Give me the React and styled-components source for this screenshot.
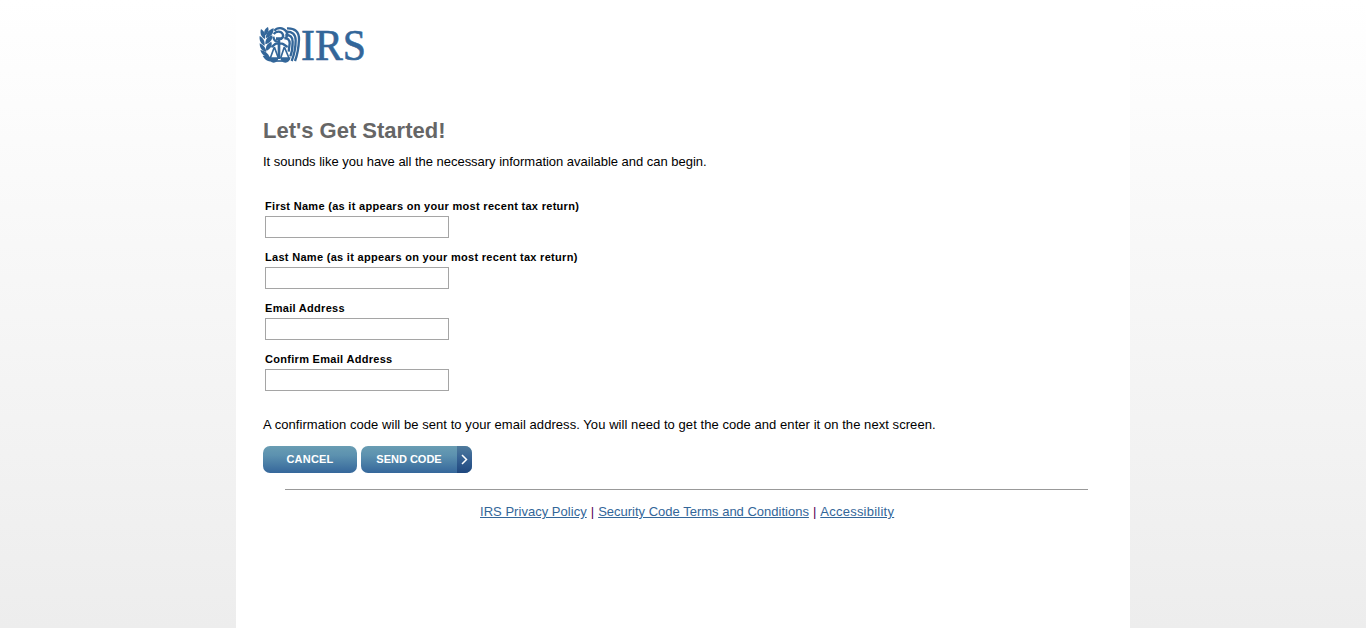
import React from "react";
import styled, { createGlobalStyle } from "styled-components";

const Global = createGlobalStyle`
  body { margin: 0; background: #fff; font-family: "Liberation Sans", Arial, sans-serif; color: #000; }
`;

const Backdrop = styled.div`
  height: 628px;
  display: flex;
  justify-content: center;
  background: linear-gradient(#ffffff, #ededed);
`;

const Page = styled.main`
  box-sizing: border-box;
  width: 894px;
  height: 628px;
  padding: 26px 27px 0;
  background: #fff;
`;

const Logo = styled.svg`
  display: block;
  width: 108px;
  height: 38px;
  margin-left: -4px;
  overflow: visible;
`;

const Wordmark = styled.text`
  font-family: "Liberation Serif", "Times New Roman", serif;
  font-size: 44.5px;
  fill: #336699;
  stroke: #336699;
  stroke-width: 0.6px;
`;

const Title = styled.h1`
  margin: 53px 0 0;
  padding-top: 1px;
  font-size: 22px;
  line-height: 26px;
  color: #666;
`;

const Text = styled.p`
  margin: ${(p) => p.$top}px 0 0;
  font-size: 13px;
  line-height: 16px;
  white-space: nowrap;
  letter-spacing: ${(p) => p.$track}px;
`;

const Form = styled.form`
  display: flex;
  flex-direction: column;
  gap: 13px;
  margin: 30px 0 0 2px;
`;

const Field = styled.label`
  display: flex;
  flex-direction: column;
  align-items: flex-start;
  gap: 3px;
  font-size: 11px;
  font-weight: bold;
  line-height: 13px;
  letter-spacing: 0.3px;
`;

const Input = styled.input`
  box-sizing: border-box;
  width: 184px;
  height: 22px;
  margin: 0;
  padding: 1px 3px;
  border: 1px solid #a5a5a5;
  border-radius: 0;
  background: #fff;
`;

const Actions = styled.div`
  display: flex;
  gap: 4px;
  margin-top: 13px;
`;

const Button = styled.button`
  display: flex;
  align-items: stretch;
  width: ${(p) => p.$width}px;
  height: 27px;
  padding: 0;
  border: 0;
  border-radius: 7px;
  overflow: hidden;
  background: linear-gradient(#699db3, #5c91af 35%, #35679b);
  color: #fff;
  font: bold 11px/27px "Liberation Sans", Arial, sans-serif;
  letter-spacing: ${(p) => p.$track || 0}px;
`;

const Caption = styled.span`
  flex: 1;
  text-align: center;
`;

const Arrow = styled.span`
  display: flex;
  align-items: center;
  justify-content: center;
  width: 15px;
  background: linear-gradient(#4f7b9c, #376294 45%, #1f477e);
`;

const Footer = styled.footer`
  width: 803px;
  margin: 16px 0 0 22px;
  padding-top: 14px;
  border-top: 1px solid #999;
`;

const Links = styled.nav`
  display: flex;
  gap: 4px;
  margin-left: 195px;
  font-size: 13px;
  line-height: 16px;
  color: #505;
  white-space: nowrap;
`;

const Link = styled.a`
  color: #336699;
  text-decoration: underline;
  letter-spacing: ${(p) => p.$track}px;
`;

const leaves = [
  "M30 6C34 15 31 24 22 31C15 23 19 12 30 6Z",
  "M9 12C20 19 24 29 21 42C9 36 5 25 9 12Z",
  "M47 10C47 26 39 36 24 39C23 25 32 14 47 10Z",
  "M5 33C16 39 21 48 20 62C8 57 3 46 5 33Z",
  "M43 31C44 45 36 55 22 58C21 44 29 34 43 31Z",
  "M5 55C17 60 24 69 25 81C11 78 5 69 5 55Z",
  "M40 50C44 62 37 73 25 77C21 64 28 55 40 50Z",
  "M7 75C20 77 30 84 35 96C20 96 11 89 7 75Z",
  "M14 93C26 91 37 95 46 106C35 114 22 107 14 93Z",
];

const feathers = [
  "M87 10C110 9 124 20 123 44C122 69 119 87 111 108",
  "M84 20C103 19 113 28 113 46C113 68 109 88 101 108",
  "M82 30C96 29 104 36 104 50C104 66 102 81 97 94",
  "M79 40C89 39 95 44 95 55L92 80",
  "M49 17C58 6 75 7 84 18C90 26 88 34 82 40",
  "M47 27C54 18 69 17 74 27C77 33 75 38 70 41",
];

function IrsLogo() {
  return (
    <Logo viewBox="0 0 108 38" role="img" aria-label="IRS">
      <g transform="translate(-1 -1) scale(.33333)" fill="#336699">
        {leaves.map((d) => <path key={d} d={d} />)}
        <g fill="none" stroke="#336699" strokeWidth="7">
          {feathers.map((d) => <path key={d} d={d} />)}
          <path d="M46 35C47 44 52 50 60 50" />
          <path d="M54 41H72M63 37V102" strokeWidth="8" />
          <path d="M40 66C47 62 49 57 55 56H72C78 57 81 62 89 66" />
          <path d="M49 66L37 99M49 66L61 99M79 66L68 99M79 66L93 99" strokeWidth="5" />
          <path d="M52 108H76" strokeWidth="5" />
        </g>
        <path d="M32 97H62C60 108 55 113 47 113C39 113 34 107 32 97ZM66 97H98C96 108 90 113 82 113C73 113 68 107 66 97Z" />
      </g>
      <Wordmark x="42" y="34" textLength="65" lengthAdjust="spacingAndGlyphs">IRS</Wordmark>
    </Logo>
  );
}

const fields = [
  "First Name (as it appears on your most recent tax return)",
  "Last Name (as it appears on your most recent tax return)",
  "Email Address",
  "Confirm Email Address",
];

export default function App() {
  return (
    <>
      <Global />
      <Backdrop>
        <Page>
          <IrsLogo />
          <Title>Let's Get Started!</Title>
          <Text $top={10} $track={-0.02}>It sounds like you have all the necessary information available and can begin.</Text>
          <Form>
            {fields.map((label) => (
              <Field key={label}>
                {label}
                <Input type="text" />
              </Field>
            ))}
          </Form>
          <Text $top={26} $track={0.06}>
            A confirmation code will be sent to your email address. You will need to get the code and enter it on the next screen.
          </Text>
          <Actions>
            <Button type="button" $width={94} $track={0.2}><Caption>CANCEL</Caption></Button>
            <Button type="button" $width={111}>
              <Caption>SEND CODE</Caption>
              <Arrow>
                <svg width="7" height="11" viewBox="0 0 7 11" fill="none" stroke="#fff" strokeWidth="1.5">
                  <path d="M1 1L5.5 5.5L1 10" />
                </svg>
              </Arrow>
            </Button>
          </Actions>
          <Footer>
            <Links>
              <Link $track={0.03}>IRS Privacy Policy</Link>|
              <Link $track={0}>Security Code Terms and Conditions</Link>|
              <Link $track={0.24}>Accessibility</Link>
            </Links>
          </Footer>
        </Page>
      </Backdrop>
    </>
  );
}
